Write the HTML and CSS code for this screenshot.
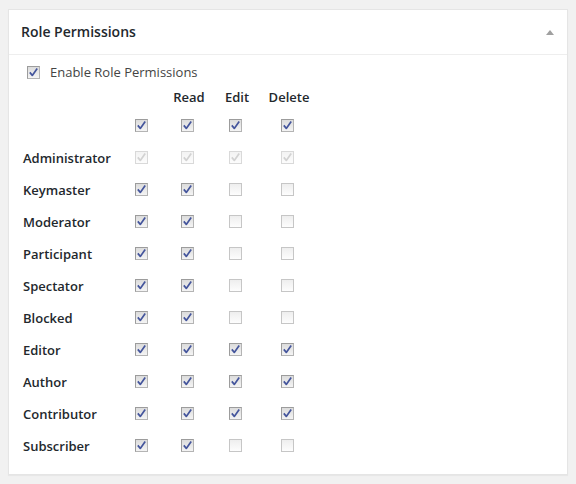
FILE: index.html
```html
<!DOCTYPE html>
<html>
<head>
<meta charset="utf-8">
<link rel="stylesheet" href="styles.css">
</head>
<body>
<svg class="defs" aria-hidden="true"><symbol id="chk" viewBox="0 0 11 11"><path d="M1.8 5.4 L4.3 8.4 L9.2 1.6" fill="none" stroke="currentColor" stroke-width="1.7" stroke-linejoin="round"/></symbol></svg>
<div class="postbox">
  <div class="hndle">
    <h2 class="title">Role Permissions</h2>
    <span class="toggle"></span>
  </div>
  <div class="inside">
    <label class="enable"><span class="cb on"><svg><use href="#chk"/></svg></span>Enable Role Permissions</label>
    <div class="grid">
      <div></div><div></div><div class="th">Read</div><div class="th">Edit</div><div class="th">Delete</div>

      <div class="lbl"></div>
      <div class="c"><span class="cb on"><svg><use href="#chk"/></svg></span></div>
      <div class="c"><span class="cb on"><svg><use href="#chk"/></svg></span></div>
      <div class="c"><span class="cb on"><svg><use href="#chk"/></svg></span></div>
      <div class="c"><span class="cb on"><svg><use href="#chk"/></svg></span></div>

      <div class="lbl">Administrator</div>
      <div class="c"><span class="cb dis"><svg><use href="#chk"/></svg></span></div>
      <div class="c"><span class="cb dis"><svg><use href="#chk"/></svg></span></div>
      <div class="c"><span class="cb dis"><svg><use href="#chk"/></svg></span></div>
      <div class="c"><span class="cb dis"><svg><use href="#chk"/></svg></span></div>

      <div class="lbl">Keymaster</div>
      <div class="c"><span class="cb on"><svg><use href="#chk"/></svg></span></div>
      <div class="c"><span class="cb on"><svg><use href="#chk"/></svg></span></div>
      <div class="c"><span class="cb"></span></div>
      <div class="c"><span class="cb"></span></div>

      <div class="lbl">Moderator</div>
      <div class="c"><span class="cb on"><svg><use href="#chk"/></svg></span></div>
      <div class="c"><span class="cb on"><svg><use href="#chk"/></svg></span></div>
      <div class="c"><span class="cb"></span></div>
      <div class="c"><span class="cb"></span></div>

      <div class="lbl">Participant</div>
      <div class="c"><span class="cb on"><svg><use href="#chk"/></svg></span></div>
      <div class="c"><span class="cb on"><svg><use href="#chk"/></svg></span></div>
      <div class="c"><span class="cb"></span></div>
      <div class="c"><span class="cb"></span></div>

      <div class="lbl">Spectator</div>
      <div class="c"><span class="cb on"><svg><use href="#chk"/></svg></span></div>
      <div class="c"><span class="cb on"><svg><use href="#chk"/></svg></span></div>
      <div class="c"><span class="cb"></span></div>
      <div class="c"><span class="cb"></span></div>

      <div class="lbl">Blocked</div>
      <div class="c"><span class="cb on"><svg><use href="#chk"/></svg></span></div>
      <div class="c"><span class="cb on"><svg><use href="#chk"/></svg></span></div>
      <div class="c"><span class="cb"></span></div>
      <div class="c"><span class="cb"></span></div>

      <div class="lbl">Editor</div>
      <div class="c"><span class="cb on"><svg><use href="#chk"/></svg></span></div>
      <div class="c"><span class="cb on"><svg><use href="#chk"/></svg></span></div>
      <div class="c"><span class="cb on"><svg><use href="#chk"/></svg></span></div>
      <div class="c"><span class="cb on"><svg><use href="#chk"/></svg></span></div>

      <div class="lbl">Author</div>
      <div class="c"><span class="cb on"><svg><use href="#chk"/></svg></span></div>
      <div class="c"><span class="cb on"><svg><use href="#chk"/></svg></span></div>
      <div class="c"><span class="cb on"><svg><use href="#chk"/></svg></span></div>
      <div class="c"><span class="cb on"><svg><use href="#chk"/></svg></span></div>

      <div class="lbl">Contributor</div>
      <div class="c"><span class="cb on"><svg><use href="#chk"/></svg></span></div>
      <div class="c"><span class="cb on"><svg><use href="#chk"/></svg></span></div>
      <div class="c"><span class="cb on"><svg><use href="#chk"/></svg></span></div>
      <div class="c"><span class="cb on"><svg><use href="#chk"/></svg></span></div>

      <div class="lbl">Subscriber</div>
      <div class="c"><span class="cb on"><svg><use href="#chk"/></svg></span></div>
      <div class="c"><span class="cb on"><svg><use href="#chk"/></svg></span></div>
      <div class="c"><span class="cb"></span></div>
      <div class="c"><span class="cb"></span></div>
    </div>
  </div>
</div>
</body>
</html>
```
FILE: styles.css
```css
html, body {
  margin: 0;
  background: #f1f1f1;
}
body {
  padding: 9px 8px;
  font-family: "Open Sans", "Liberation Sans", sans-serif;
  font-size: 13px;
  color: #444;
}
.defs {
  position: absolute;
  width: 0;
  height: 0;
  overflow: hidden;
}
.postbox {
  background: #fff;
  border: 1px solid #e5e5e5;
  box-shadow: 0 1px 1px rgba(0, 0, 0, 0.04);
}
.hndle {
  height: 44px;
  display: flex;
  align-items: center;
  justify-content: space-between;
  padding: 0 12px;
  border-bottom: 1px solid #eee;
}
.title {
  margin: 0;
  font-size: 14px;
  font-weight: 600;
  line-height: 20px;
  color: #23282d;
}
.toggle {
  width: 0;
  height: 0;
  margin-right: 1px;
  border-left: 4px solid transparent;
  border-right: 4px solid transparent;
  border-bottom: 5px solid #a0a0a0;
}
.inside {
  padding: 7px 12px 13px;
}
.enable {
  display: flex;
  align-items: center;
  height: 20px;
  padding-left: 6px;
  line-height: 20px;
  color: #444;
}
.enable .cb {
  margin-right: 10px;
}
.grid {
  margin-top: 5px;
  margin-left: 2px;
  display: grid;
  grid-template-columns: 97px 46px 46px 50px 54px;
  grid-template-rows: 22px;
  grid-auto-rows: 32px;
}
.th {
  text-align: center;
  font-weight: 600;
  line-height: 20px;
  color: #23282d;
}
.lbl {
  display: flex;
  align-items: center;
  font-weight: 600;
  color: #23282d;
  padding-top: 1px;
}
.c {
  display: flex;
  align-items: center;
  justify-content: center;
}
.c .cb {
  margin-right: 4px;
}
.cb {
  box-sizing: border-box;
  width: 13px;
  height: 13px;
  flex: none;
  display: flex;
  align-items: center;
  justify-content: center;
  border: 1px solid #c6c6c6;
  background: linear-gradient(#eeeeee, #fdfdfd);
}
.cb svg {
  width: 11px;
  height: 11px;
  display: block;
}
.cb.on {
  border-color: #9c9c9c #b4b4b4 #b4b4b4 #9c9c9c;
  background: linear-gradient(#dcdcdc, #f4f4f4);
  color: #44559c;
}
.cb.dis {
  border-color: #d9d9d9;
  background: linear-gradient(#f3f3f3, #fcfcfc);
  color: #d2d2d2;
}
```
